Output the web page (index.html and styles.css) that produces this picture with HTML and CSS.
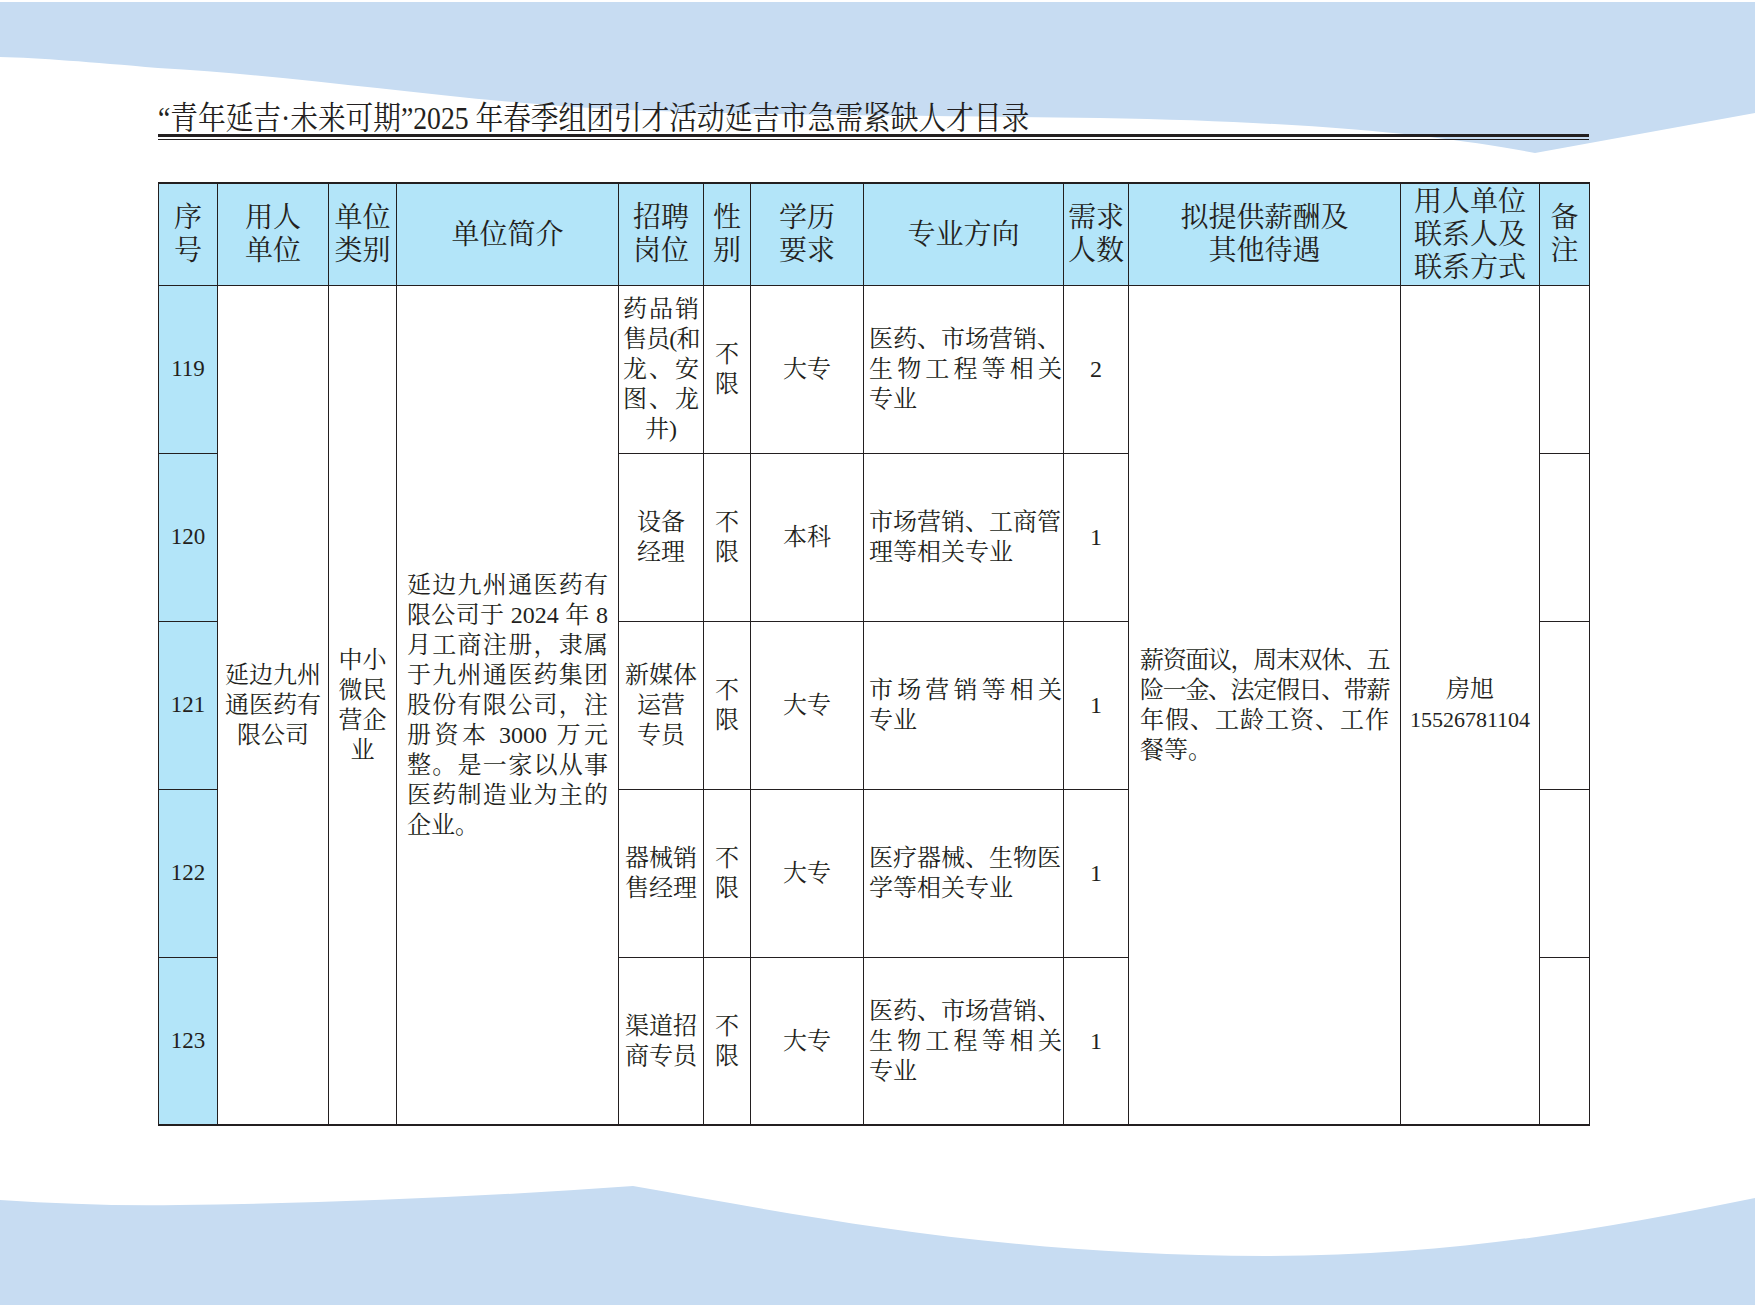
FILE: index.html
```html
<!DOCTYPE html>
<html lang="zh-CN">
<head>
<meta charset="utf-8">
<title>延吉市急需紧缺人才目录</title>
<link rel="stylesheet" href="styles.css">
</head>
<body>
<svg class="bg" width="1755" height="1307" viewBox="0 0 1755 1307" aria-hidden="true">
  <path fill="#c7dcf2" d="M0,2 L1755,2 L1755,113 L1535,153 C1450,137 1330,122 1100,118 C900,115 720,116 574,107 C420,96 300,76 158,68 C90,62 40,58 0,57 Z"/>
  <path fill="#c7dcf2" d="M0,1200 C60,1204 120,1206 179,1205 C330,1203 480,1197 633,1186 C800,1215 1000,1256 1265,1256 C1450,1256 1600,1230 1755,1198 L1755,1305 L0,1305 Z"/>
</svg>
<main class="page">
  <div class="title"><span>“青年延吉·未来可期”2025 年春季组团引才活动延吉市急需紧缺人才目录</span></div>
  <div class="rule"></div>
  <table class="grid">
    <colgroup>
      <col class="w59"><col class="w111"><col class="w68"><col class="w222"><col class="w85"><col class="w47">
      <col class="w113"><col class="w200"><col class="w65"><col class="w272"><col class="w139"><col class="w50">
    </colgroup>
    <thead>
      <tr class="hd">
        <th>序<br>号</th>
        <th>用人<br>单位</th>
        <th>单位<br>类别</th>
        <th>单位简介</th>
        <th>招聘<br>岗位</th>
        <th>性<br>别</th>
        <th>学历<br>要求</th>
        <th>专业方向</th>
        <th>需求<br>人数</th>
        <th>拟提供薪酬及<br>其他待遇</th>
        <th>用人单位<br>联系人及<br>联系方式</th>
        <th>备<br>注</th>
      </tr>
    </thead>
    <tbody>
      <tr class="row">
        <td class="no">119</td>
        <td rowspan="5" class="c">延边九州<br>通医药有<br>限公司</td>
        <td rowspan="5" class="c">中小<br>微民<br>营企<br>业</td>
        <td rowspan="5" class="intro">
          <span class="l j">延边九州通医药有</span>
          <span class="l j">限公司于 2024 年 8</span>
          <span class="l j">月工商注册，隶属</span>
          <span class="l j">于九州通医药集团</span>
          <span class="l j">股份有限公司，注</span>
          <span class="l j">册资本 3000 万元</span>
          <span class="l j">整。是一家以从事</span>
          <span class="l j">医药制造业为主的</span>
          <span class="l">企业。</span>
        </td>
        <td class="pos">
          <span class="l j">药品销</span>
          <span class="l j t15">售员(和</span>
          <span class="l j">龙、安</span>
          <span class="l j">图、龙</span>
          <span class="l">井)</span>
        </td>
        <td class="c">不<br>限</td>
        <td class="c">大专</td>
        <td class="major">
          <span class="l">医药、市场营销、</span>
          <span class="l j">生物工程等相关</span>
          <span class="l">专业</span>
        </td>
        <td class="c num">2</td>
        <td rowspan="5" class="pay">
          <span class="l j t15">薪资面议，周末双休、五</span>
          <span class="l j t15">险一金、法定假日、带薪</span>
          <span class="l j">年假、工龄工资、工作</span>
          <span class="l">餐等。</span>
        </td>
        <td rowspan="5" class="c">房旭<br><span class="tel">15526781104</span></td>
        <td></td>
      </tr>
      <tr class="row">
        <td class="no">120</td>
        <td class="pos"><span class="l">设备</span><span class="l">经理</span></td>
        <td class="c">不<br>限</td>
        <td class="c">本科</td>
        <td class="major">
          <span class="l">市场营销、工商管</span>
          <span class="l">理等相关专业</span>
        </td>
        <td class="c num">1</td>
        <td></td>
      </tr>
      <tr class="row">
        <td class="no">121</td>
        <td class="pos"><span class="l">新媒体</span><span class="l">运营</span><span class="l">专员</span></td>
        <td class="c">不<br>限</td>
        <td class="c">大专</td>
        <td class="major">
          <span class="l j">市场营销等相关</span>
          <span class="l">专业</span>
        </td>
        <td class="c num">1</td>
        <td></td>
      </tr>
      <tr class="row">
        <td class="no">122</td>
        <td class="pos"><span class="l">器械销</span><span class="l">售经理</span></td>
        <td class="c">不<br>限</td>
        <td class="c">大专</td>
        <td class="major">
          <span class="l">医疗器械、生物医</span>
          <span class="l">学等相关专业</span>
        </td>
        <td class="c num">1</td>
        <td></td>
      </tr>
      <tr class="row">
        <td class="no">123</td>
        <td class="pos"><span class="l">渠道招</span><span class="l">商专员</span></td>
        <td class="c">不<br>限</td>
        <td class="c">大专</td>
        <td class="major">
          <span class="l">医药、市场营销、</span>
          <span class="l j">生物工程等相关</span>
          <span class="l">专业</span>
        </td>
        <td class="c num">1</td>
        <td></td>
      </tr>
    </tbody>
  </table>
</main>
</body>
</html>
```

FILE: styles.css
```css
* { box-sizing: border-box; }

html, body {
  margin: 0;
  padding: 0;
}

body {
  width: 1755px;
  height: 1307px;
  position: relative;
  overflow: hidden;
  background: #ffffff;
  color: #231f20;
  font-family: "Liberation Serif", "Noto Serif CJK SC", "Noto Sans CJK SC", serif;
}

.bg {
  position: absolute;
  left: 0;
  top: 0;
  z-index: 0;
}

.page {
  position: relative;
  z-index: 1;
  padding: 102px 0 0 158px;
  width: 1589px;
}

.title {
  height: 35px;
  border-bottom: 3px solid #231f20;
  font-size: 32px;
  line-height: 32px;
  white-space: nowrap;
}

.title span {
  display: inline-block;
  transform: scaleX(0.865);
  transform-origin: left center;
}

.rule {
  height: 1px;
  margin-top: 2px;
  background: #231f20;
}

.grid {
  margin-top: 42px;
  width: 1431px;
  border-collapse: collapse;
  table-layout: fixed;
  border-top: 2px solid #231f20;
  border-bottom: 2px solid #231f20;
}

.w59 { width: 59px; }
.w111 { width: 111px; }
.w68 { width: 68px; }
.w222 { width: 222px; }
.w85 { width: 85px; }
.w47 { width: 47px; }
.w113 { width: 113px; }
.w200 { width: 200px; }
.w65 { width: 65px; }
.w272 { width: 272px; }
.w139 { width: 139px; }
.w50 { width: 50px; }

.grid th,
.grid td {
  border: 1px solid #231f20;
  padding: 0;
  vertical-align: middle;
  text-align: center;
}

.grid th {
  background: #b3e5f9;
  font-weight: normal;
  font-size: 28px;
  line-height: 33px;
}

.hd { height: 102px; }

.row { height: 168px; }

.grid td {
  font-size: 24px;
  line-height: 30px;
}

.grid td.no {
  background: #b3e5f9;
  font-size: 23px;
}

.num { font-size: 23px; }

.l { display: block; }

.j {
  text-align: justify;
  text-align-last: justify;
}

.t15 { letter-spacing: -1.5px; }

.intro {
  padding: 0 10px !important;
  text-align: left !important;
}

.pos {
  padding: 0 4px !important;
}

.major {
  padding: 0 1px 0 5px !important;
  text-align: left !important;
}

.pay {
  padding: 0 11px !important;
  text-align: left !important;
}

.tel {
  font-size: 22px;
}
```
